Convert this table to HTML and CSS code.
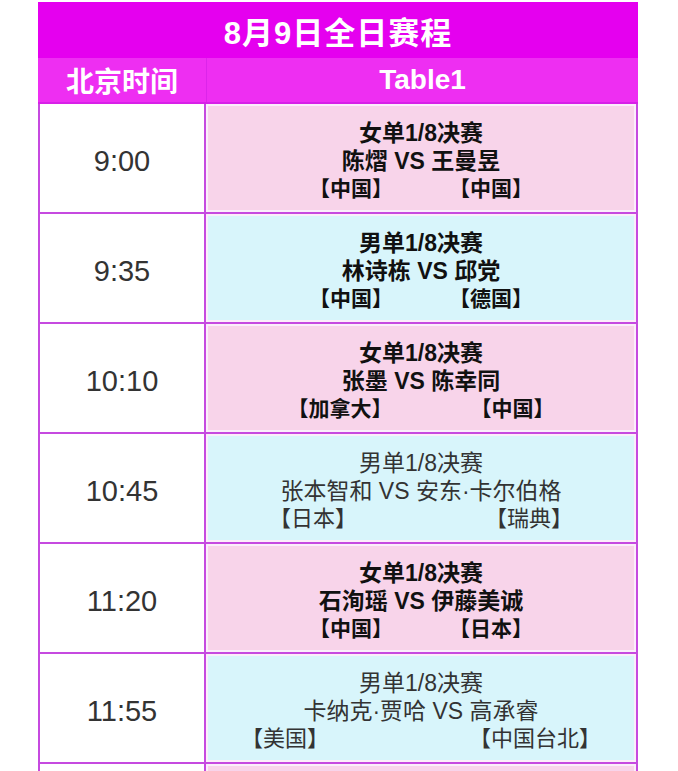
FILE: index.html
```html
<!DOCTYPE html>
<html lang="zh">
<head>
<meta charset="utf-8">
<title>8月9日全日赛程</title>
<link rel="stylesheet" href="styles.css">
</head>
<body>
<div class="sheet">
  <div class="title">8月9日全日赛程</div>
  <div class="row head">
    <div class="cell">北京时间</div>
    <div class="cell">Table1</div>
  </div>

  <div class="row">
    <div class="cell time">9:00</div>
    <div class="cell match pink bold">
      <div>女单1/8决赛</div>
      <div>陈熠 VS 王曼昱</div>
      <div class="teams gap-s"><span>【中国】</span><span>【中国】</span></div>
    </div>
  </div>

  <div class="row">
    <div class="cell time">9:35</div>
    <div class="cell match cyan bold">
      <div>男单1/8决赛</div>
      <div>林诗栋 VS 邱党</div>
      <div class="teams gap-s"><span>【中国】</span><span>【德国】</span></div>
    </div>
  </div>

  <div class="row">
    <div class="cell time">10:10</div>
    <div class="cell match pink bold">
      <div>女单1/8决赛</div>
      <div>张墨 VS 陈幸同</div>
      <div class="teams gap-m"><span>【加拿大】</span><span>【中国】</span></div>
    </div>
  </div>

  <div class="row">
    <div class="cell time">10:45</div>
    <div class="cell match cyan">
      <div>男单1/8决赛</div>
      <div>张本智和 VS 安东·卡尔伯格</div>
      <div class="teams gap-l"><span>【日本】</span><span>【瑞典】</span></div>
    </div>
  </div>

  <div class="row">
    <div class="cell time">11:20</div>
    <div class="cell match pink bold">
      <div>女单1/8决赛</div>
      <div>石洵瑶 VS 伊藤美诚</div>
      <div class="teams gap-s"><span>【中国】</span><span>【日本】</span></div>
    </div>
  </div>

  <div class="row">
    <div class="cell time">11:55</div>
    <div class="cell match cyan">
      <div>男单1/8决赛</div>
      <div>卡纳克·贾哈 VS 高承睿</div>
      <div class="teams gap-xl"><span>【美国】</span><span>【中国台北】</span></div>
    </div>
  </div>

  <div class="row">
    <div class="cell time"></div>
    <div class="cell match pink bold"></div>
  </div>
</div>
</body>
</html>
```

FILE: styles.css
```css
html, body {
  margin: 0;
  padding: 0;
  background: #ffffff;
}
body {
  font-family: "Liberation Sans", Arial, "Noto Sans CJK SC", sans-serif;
  overflow: hidden;
  height: 771px;
}
.sheet {
  width: 600px;
  margin: 2px 0 0 38px;
}
.title {
  height: 56px;
  background: #e500ef;
  color: #ffffff;
  font-weight: bold;
  font-size: 31px;
  letter-spacing: 1px;
  display: flex;
  align-items: center;
  justify-content: center;
}
.row {
  display: grid;
  grid-template-columns: 168px 1fr;
  height: 110px;
  border-bottom: 2px solid #c64ae0;
  box-sizing: border-box;
}
.row.head {
  height: 46px;
  background: #ee2ef2;
  border-bottom: 2px solid #d820e8;
}
.head .cell {
  color: #ffffff;
  font-weight: bold;
  font-size: 28px;
  display: flex;
  align-items: center;
  justify-content: center;
}
.head .cell + .cell {
  border-left: 1px solid #dc24ea;
}
.cell {
  box-sizing: border-box;
}
.time {
  border-left: 2px solid #c64ae0;
  border-right: 2px solid #c64ae0;
  background: #ffffff;
  display: flex;
  align-items: center;
  justify-content: center;
  font-size: 29px;
  color: #333333;
  padding-top: 6px;
}
.match {
  border-right: 2px solid #c64ae0;
  box-shadow: inset 0 0 0 2px #fbeefa;
  display: flex;
  flex-direction: column;
  align-items: center;
  justify-content: center;
  font-size: 23px;
  line-height: 28px;
  color: #333333;
  padding-top: 6px;
}
.match.bold {
  font-weight: bold;
  color: #111111;
}
.pink {
  background: #f8d4ea;
}
.cyan {
  background: #d8f5fb;
}
.teams {
  display: flex;
  justify-content: center;
  font-size: 21px;
}
.match:not(.bold) .teams {
  font-size: 22px;
}
.gap-s { gap: 56px; }
.gap-m { gap: 78px; }
.gap-l { gap: 128px; }
.gap-xl { gap: 140px; }
```
